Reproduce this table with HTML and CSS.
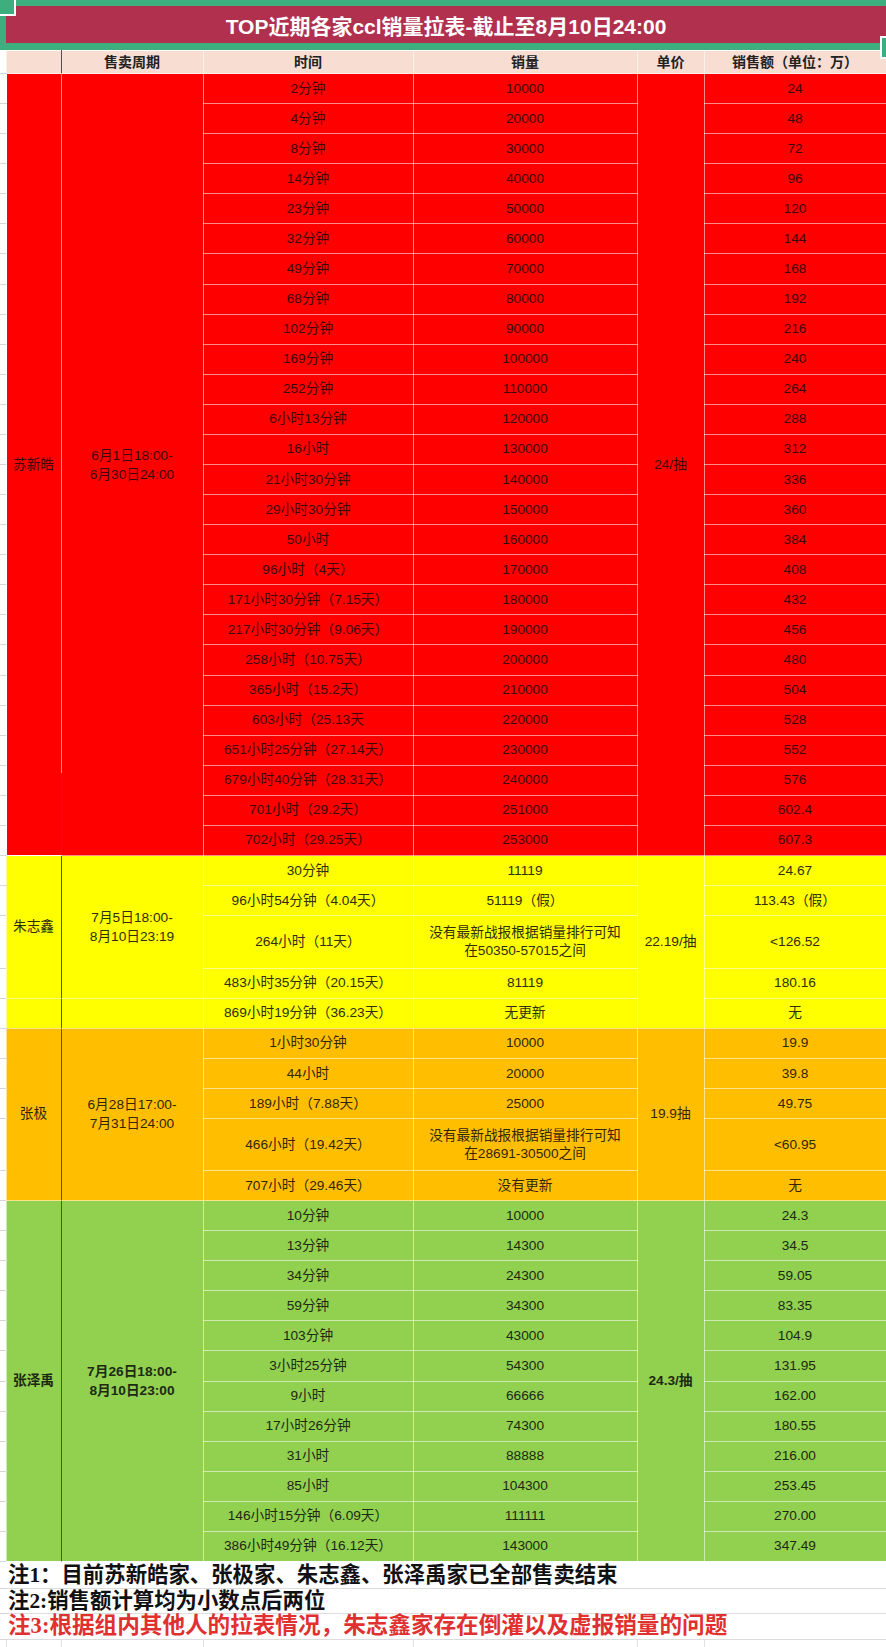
FILE: index.html
```html
<!DOCTYPE html>
<html lang="zh-CN">
<head>
<meta charset="utf-8">
<title>TOP近期各家ccl销量拉表</title>
<link rel="stylesheet" href="styles.css">
</head>
<body>
<div class="sheet">
  <div class="title">TOP近期各家ccl销量拉表-截止至8月10日24:00</div>
  <div class="handle handle-tl"></div>
  <div class="handle handle-br"></div>
  <table class="grid">
    <colgroup>
      <col class="c-g"><col class="c-a"><col class="c-b"><col class="c-c"><col class="c-d"><col class="c-e"><col class="c-f">
    </colgroup>
    <tbody>
      <tr class="hd"><td class="g"></td><td class="a"></td><td>售卖周期</td><td>时间</td><td>销量</td><td>单价</td><td>销售额（单位：万）</td></tr>

      <tr class="r red"><td class="g"></td><td class="a a-red" rowspan="26">苏新皓</td><td class="b" rowspan="26">6月1日18:00-<br>6月30日24:00</td><td>2分钟</td><td>10000</td><td class="e" rowspan="26">24/抽</td><td>24</td></tr>
      <tr class="r red"><td class="g"></td><td>4分钟</td><td>20000</td><td>48</td></tr>
      <tr class="r red"><td class="g"></td><td>8分钟</td><td>30000</td><td>72</td></tr>
      <tr class="r red"><td class="g"></td><td>14分钟</td><td>40000</td><td>96</td></tr>
      <tr class="r red"><td class="g"></td><td>23分钟</td><td>50000</td><td>120</td></tr>
      <tr class="r red"><td class="g"></td><td>32分钟</td><td>60000</td><td>144</td></tr>
      <tr class="r red"><td class="g"></td><td>49分钟</td><td>70000</td><td>168</td></tr>
      <tr class="r red"><td class="g"></td><td>68分钟</td><td>80000</td><td>192</td></tr>
      <tr class="r red"><td class="g"></td><td>102分钟</td><td>90000</td><td>216</td></tr>
      <tr class="r red"><td class="g"></td><td>169分钟</td><td>100000</td><td>240</td></tr>
      <tr class="r red"><td class="g"></td><td>252分钟</td><td>110000</td><td>264</td></tr>
      <tr class="r red"><td class="g"></td><td>6小时13分钟</td><td>120000</td><td>288</td></tr>
      <tr class="r red"><td class="g"></td><td>16小时</td><td>130000</td><td>312</td></tr>
      <tr class="r red"><td class="g"></td><td>21小时30分钟</td><td>140000</td><td>336</td></tr>
      <tr class="r red"><td class="g"></td><td>29小时30分钟</td><td>150000</td><td>360</td></tr>
      <tr class="r red"><td class="g"></td><td>50小时</td><td>160000</td><td>384</td></tr>
      <tr class="r red"><td class="g"></td><td>96小时（4天）</td><td>170000</td><td>408</td></tr>
      <tr class="r red"><td class="g"></td><td>171小时30分钟（7.15天）</td><td>180000</td><td>432</td></tr>
      <tr class="r red"><td class="g"></td><td>217小时30分钟（9.06天）</td><td>190000</td><td>456</td></tr>
      <tr class="r red"><td class="g"></td><td>258小时（10.75天）</td><td>200000</td><td>480</td></tr>
      <tr class="r red"><td class="g"></td><td>365小时（15.2天）</td><td>210000</td><td>504</td></tr>
      <tr class="r red"><td class="g"></td><td>603小时（25.13天</td><td>220000</td><td>528</td></tr>
      <tr class="r red"><td class="g"></td><td>651小时25分钟（27.14天）</td><td>230000</td><td>552</td></tr>
      <tr class="r red"><td class="g"></td><td>679小时40分钟（28.31天）</td><td>240000</td><td>576</td></tr>
      <tr class="r red"><td class="g"></td><td>701小时（29.2天）</td><td>251000</td><td>602.4</td></tr>
      <tr class="r red"><td class="g"></td><td>702小时（29.25天）</td><td>253000</td><td>607.3</td></tr>

      <tr class="r yellow"><td class="g"></td><td class="a" rowspan="4">朱志鑫</td><td class="b" rowspan="4">7月5日18:00-<br>8月10日23:19</td><td>30分钟</td><td>11119</td><td class="e" rowspan="5">22.19/抽</td><td>24.67</td></tr>
      <tr class="r yellow"><td class="g"></td><td>96小时54分钟（4.04天）</td><td>51119（假）</td><td>113.43（假）</td></tr>
      <tr class="tall-y yellow"><td class="g"></td><td>264小时（11天）</td><td>没有最新战报根据销量排行可知<br>在50350-57015之间</td><td>&lt;126.52</td></tr>
      <tr class="r yellow"><td class="g"></td><td>483小时35分钟（20.15天）</td><td>81119</td><td>180.16</td></tr>
      <tr class="r yellow"><td class="g"></td><td class="a"></td><td class="b"></td><td>869小时19分钟（36.23天）</td><td>无更新</td><td>无</td></tr>

      <tr class="r orange"><td class="g"></td><td class="a" rowspan="5">张极</td><td class="b" rowspan="5">6月28日17:00-<br>7月31日24:00</td><td>1小时30分钟</td><td>10000</td><td class="e" rowspan="5">19.9抽</td><td>19.9</td></tr>
      <tr class="r orange"><td class="g"></td><td>44小时</td><td>20000</td><td>39.8</td></tr>
      <tr class="r orange"><td class="g"></td><td>189小时（7.88天）</td><td>25000</td><td>49.75</td></tr>
      <tr class="tall-o orange"><td class="g"></td><td>466小时（19.42天）</td><td>没有最新战报根据销量排行可知<br>在28691-30500之间</td><td>&lt;60.95</td></tr>
      <tr class="r orange"><td class="g"></td><td>707小时（29.46天）</td><td>没有更新</td><td>无</td></tr>

      <tr class="r green"><td class="g"></td><td class="a" rowspan="12">张泽禹</td><td class="b" rowspan="12">7月26日18:00-<br>8月10日23:00</td><td>10分钟</td><td>10000</td><td class="e" rowspan="12">24.3/抽</td><td>24.3</td></tr>
      <tr class="r green"><td class="g"></td><td>13分钟</td><td>14300</td><td>34.5</td></tr>
      <tr class="r green"><td class="g"></td><td>34分钟</td><td>24300</td><td>59.05</td></tr>
      <tr class="r green"><td class="g"></td><td>59分钟</td><td>34300</td><td>83.35</td></tr>
      <tr class="r green"><td class="g"></td><td>103分钟</td><td>43000</td><td>104.9</td></tr>
      <tr class="r green"><td class="g"></td><td>3小时25分钟</td><td>54300</td><td>131.95</td></tr>
      <tr class="r green"><td class="g"></td><td>9小时</td><td>66666</td><td>162.00</td></tr>
      <tr class="r green"><td class="g"></td><td>17小时26分钟</td><td>74300</td><td>180.55</td></tr>
      <tr class="r green"><td class="g"></td><td>31小时</td><td>88888</td><td>216.00</td></tr>
      <tr class="r green"><td class="g"></td><td>85小时</td><td>104300</td><td>253.45</td></tr>
      <tr class="r green"><td class="g"></td><td>146小时15分钟（6.09天）</td><td>111111</td><td>270.00</td></tr>
      <tr class="r green"><td class="g"></td><td>386小时49分钟（16.12天）</td><td>143000</td><td>347.49</td></tr>

      <tr class="note n1"><td class="g"></td><td class="nt" colspan="6">注1：目前苏新皓家、张极家、朱志鑫、张泽禹家已全部售卖结束</td></tr>
      <tr class="note n2"><td class="g"></td><td class="nt" colspan="6">注2:销售额计算均为小数点后两位</td></tr>
      <tr class="note n3"><td class="g"></td><td class="nt warn" colspan="6">注3:根据组内其他人的拉表情况，朱志鑫家存在倒灌以及虚报销量的问题</td></tr>
      <tr class="blank"><td class="g"></td><td></td><td></td><td></td><td></td><td></td><td></td></tr>
    </tbody>
  </table>
</div>
</body>
</html>
```

FILE: styles.css
```css
* { box-sizing: border-box; }

html, body {
  margin: 0;
  padding: 0;
  background: #ffffff;
}

body {
  width: 886px;
  overflow: hidden;
  font-family: "Liberation Sans", "Noto Sans CJK SC", sans-serif;
}

.sheet {
  position: relative;
  width: 886px;
}

/* Title row with the green selection frame */
.title {
  height: 50px;
  border-top: 6px solid #3fae7e;
  border-left: 6px solid #3fae7e;
  border-bottom: 7px solid #3fae7e;
  background: #b0304e;
  color: #ffffff;
  font-weight: bold;
  font-size: 21px;
  display: flex;
  align-items: center;
  justify-content: center;
}

.handle {
  position: absolute;
  background: #3fae7e;
  border: 2px solid #ffffff;
}

.handle-tl {
  left: -4px;
  top: -4px;
  width: 20px;
  height: 20px;
}

.handle-br {
  left: 880px;
  top: 36px;
  width: 12px;
  height: 23px;
}

/* Grid */
.grid {
  width: 886px;
  border-collapse: collapse;
  table-layout: fixed;
}

.c-g { width: 6px; }
.c-a { width: 55px; }
.c-b { width: 142px; }
.c-c { width: 210px; }
.c-d { width: 224px; }
.c-e { width: 67px; }
.c-f { width: 182px; }

.grid td {
  padding: 0;
  text-align: center;
  vertical-align: middle;
  border: 1px solid rgba(255, 255, 255, 0.55);
  font-size: 13.7px;
  line-height: 18px;
  white-space: nowrap;
}

.grid td.g {
  border: 0;
  border-bottom: 1px solid #d6d6d6;
  background: #ffffff;
}

.grid td.a {
  border-right: 1px solid #5a4d4d;
}

.grid td.b {
  line-height: 19px;
}

.hd { height: 23px; }
.r { height: 30.08px; }
.tall-y { height: 52.6px; }
.tall-o { height: 51.8px; }

.hd td {
  background: #f8ddd2;
  color: #222222;
  font-weight: bold;
  font-size: 14px;
}

.red td { background: #fe0000; color: #3c0707; }
.yellow td { background: #ffff00; color: #2e2e10; }
.orange td { background: #ffbf00; color: #33260a; }
.green td { background: #92d050; color: #1d2a12; }

.green td.a,
.green td.b,
.green td.e { font-weight: bold; }

/* The A|B divider shows light in the upper part of the red block */
.grid td.a-red {
  position: relative;
  border-right: 1px solid rgba(255, 255, 255, 0.55);
}

.grid td.a-red::after {
  content: "";
  position: absolute;
  right: -1px;
  bottom: 0;
  width: 1px;
  height: 82px;
  background: #5a4d4d;
}

/* Notes */
.n1 { height: 27px; }
.n2 { height: 25px; }
.n3 { height: 26px; }
.blank { height: 30px; }

.grid td.nt {
  background: #ffffff;
  border: 0;
  border-bottom: 1px solid #dcdcdc;
  text-align: left;
  padding-left: 2px;
  font-family: "Liberation Serif", "Noto Sans CJK SC", serif;
  font-weight: bold;
  font-size: 21.4px;
  line-height: 22px;
  color: #111111;
}

.grid td.warn {
  color: #e0302f;
  font-size: 22.6px;
}

.blank td {
  background: #ffffff;
  border: 1px solid #e2e2e2;
}
```
